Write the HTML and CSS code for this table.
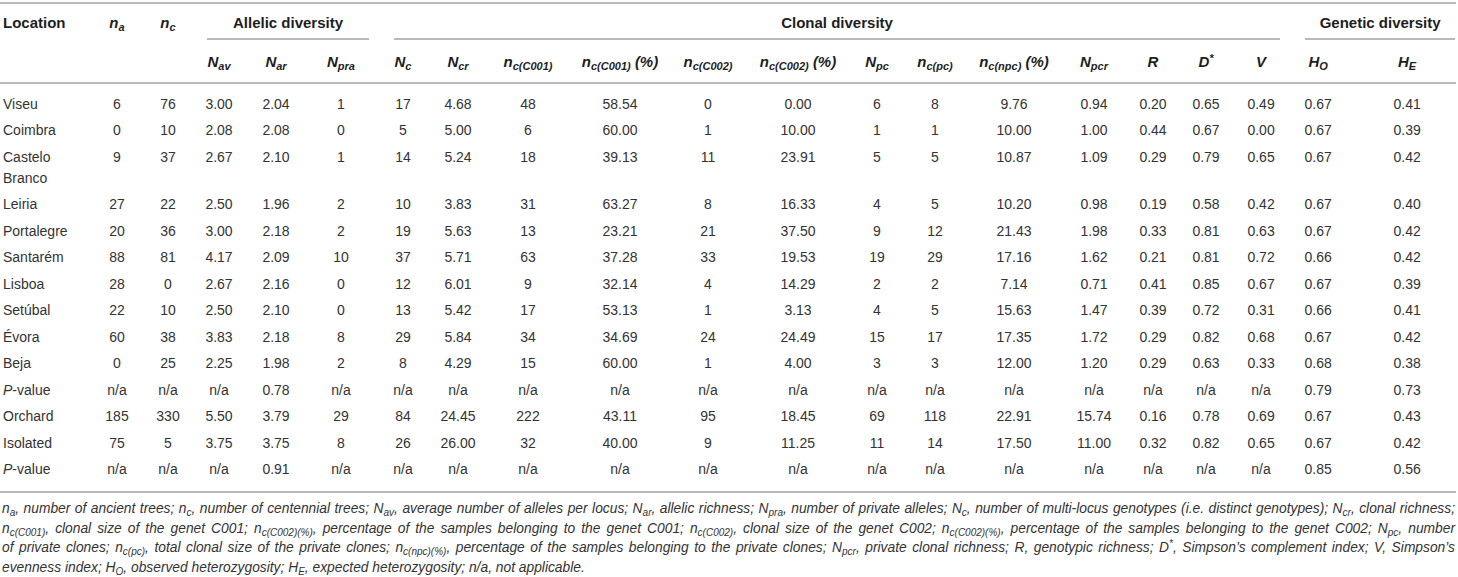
FILE: index.html
```html
<!DOCTYPE html>
<html lang="en">
<head>
<meta charset="utf-8">
<title>Table</title>
<link rel="stylesheet" href="styles.css">
</head>
<body>
<div class="page">
<table class="tbl">
<colgroup>
<col class="w-loc"><col class="w-na"><col class="w-nc">
<col class="w-nav"><col class="w-nar"><col class="w-npra">
<col class="w-ncc"><col class="w-ncr"><col class="w-c1"><col class="w-c1p"><col class="w-c2"><col class="w-c2p"><col class="w-npc"><col class="w-ncpc"><col class="w-npcp"><col class="w-npcr"><col class="w-r"><col class="w-d"><col class="w-v">
<col class="w-ho"><col class="w-he">
</colgroup>
<thead>
<tr class="h1">
<th class="loc">Location</th>
<th><i>n</i><sub>a</sub></th>
<th><i>n</i><sub>c</sub></th>
<th colspan="3" class="grp"><div class="gl gl-a">Allelic diversity</div></th>
<th colspan="13" class="grp"><div class="gl gl-c">Clonal diversity</div></th>
<th colspan="2" class="grp"><div class="gl gl-g">Genetic diversity</div></th>
</tr>
<tr class="h2">
<th></th><th></th><th></th>
<th><i>N</i><sub>av</sub></th>
<th><i>N</i><sub>ar</sub></th>
<th><i>N</i><sub>pra</sub></th>
<th><i>N</i><sub>c</sub></th>
<th><i>N</i><sub>cr</sub></th>
<th><i>n</i><sub>c(C001)</sub></th>
<th><i>n</i><sub>c(C001)</sub> <i>(%)</i></th>
<th><i>n</i><sub>c(C002)</sub></th>
<th><i>n</i><sub>c(C002)</sub> <i>(%)</i></th>
<th><i>N</i><sub>pc</sub></th>
<th><i>n</i><sub>c(pc)</sub></th>
<th><i>n</i><sub>c(npc)</sub> <i>(%)</i></th>
<th><i>N</i><sub>pcr</sub></th>
<th><i>R</i></th>
<th><i>D</i><sup>*</sup></th>
<th><i>V</i></th>
<th><i>H</i><sub>O</sub></th>
<th class="he"><i>H</i><sub>E</sub></th>
</tr>
</thead>
<tbody>
<tr class="first"><td class="loc">Viseu</td><td>6</td><td>76</td><td>3.00</td><td>2.04</td><td>1</td><td>17</td><td>4.68</td><td>48</td><td>58.54</td><td>0</td><td>0.00</td><td>6</td><td>8</td><td>9.76</td><td>0.94</td><td>0.20</td><td>0.65</td><td>0.49</td><td>0.67</td><td class="he">0.41</td></tr>
<tr><td class="loc">Coimbra</td><td>0</td><td>10</td><td>2.08</td><td>2.08</td><td>0</td><td>5</td><td>5.00</td><td>6</td><td>60.00</td><td>1</td><td>10.00</td><td>1</td><td>1</td><td>10.00</td><td>1.00</td><td>0.44</td><td>0.67</td><td>0.00</td><td>0.67</td><td class="he">0.39</td></tr>
<tr><td class="loc">Castelo Branco</td><td>9</td><td>37</td><td>2.67</td><td>2.10</td><td>1</td><td>14</td><td>5.24</td><td>18</td><td>39.13</td><td>11</td><td>23.91</td><td>5</td><td>5</td><td>10.87</td><td>1.09</td><td>0.29</td><td>0.79</td><td>0.65</td><td>0.67</td><td class="he">0.42</td></tr>
<tr><td class="loc">Leiria</td><td>27</td><td>22</td><td>2.50</td><td>1.96</td><td>2</td><td>10</td><td>3.83</td><td>31</td><td>63.27</td><td>8</td><td>16.33</td><td>4</td><td>5</td><td>10.20</td><td>0.98</td><td>0.19</td><td>0.58</td><td>0.42</td><td>0.67</td><td class="he">0.40</td></tr>
<tr><td class="loc">Portalegre</td><td>20</td><td>36</td><td>3.00</td><td>2.18</td><td>2</td><td>19</td><td>5.63</td><td>13</td><td>23.21</td><td>21</td><td>37.50</td><td>9</td><td>12</td><td>21.43</td><td>1.98</td><td>0.33</td><td>0.81</td><td>0.63</td><td>0.67</td><td class="he">0.42</td></tr>
<tr><td class="loc">Santarém</td><td>88</td><td>81</td><td>4.17</td><td>2.09</td><td>10</td><td>37</td><td>5.71</td><td>63</td><td>37.28</td><td>33</td><td>19.53</td><td>19</td><td>29</td><td>17.16</td><td>1.62</td><td>0.21</td><td>0.81</td><td>0.72</td><td>0.66</td><td class="he">0.42</td></tr>
<tr><td class="loc">Lisboa</td><td>28</td><td>0</td><td>2.67</td><td>2.16</td><td>0</td><td>12</td><td>6.01</td><td>9</td><td>32.14</td><td>4</td><td>14.29</td><td>2</td><td>2</td><td>7.14</td><td>0.71</td><td>0.41</td><td>0.85</td><td>0.67</td><td>0.67</td><td class="he">0.39</td></tr>
<tr><td class="loc">Setúbal</td><td>22</td><td>10</td><td>2.50</td><td>2.10</td><td>0</td><td>13</td><td>5.42</td><td>17</td><td>53.13</td><td>1</td><td>3.13</td><td>4</td><td>5</td><td>15.63</td><td>1.47</td><td>0.39</td><td>0.72</td><td>0.31</td><td>0.66</td><td class="he">0.41</td></tr>
<tr><td class="loc">Évora</td><td>60</td><td>38</td><td>3.83</td><td>2.18</td><td>8</td><td>29</td><td>5.84</td><td>34</td><td>34.69</td><td>24</td><td>24.49</td><td>15</td><td>17</td><td>17.35</td><td>1.72</td><td>0.29</td><td>0.82</td><td>0.68</td><td>0.67</td><td class="he">0.42</td></tr>
<tr><td class="loc">Beja</td><td>0</td><td>25</td><td>2.25</td><td>1.98</td><td>2</td><td>8</td><td>4.29</td><td>15</td><td>60.00</td><td>1</td><td>4.00</td><td>3</td><td>3</td><td>12.00</td><td>1.20</td><td>0.29</td><td>0.63</td><td>0.33</td><td>0.68</td><td class="he">0.38</td></tr>
<tr><td class="loc"><i>P</i>-value</td><td>n/a</td><td>n/a</td><td>n/a</td><td>0.78</td><td>n/a</td><td>n/a</td><td>n/a</td><td>n/a</td><td>n/a</td><td>n/a</td><td>n/a</td><td>n/a</td><td>n/a</td><td>n/a</td><td>n/a</td><td>n/a</td><td>n/a</td><td>n/a</td><td>0.79</td><td class="he">0.73</td></tr>
<tr><td class="loc">Orchard</td><td>185</td><td>330</td><td>5.50</td><td>3.79</td><td>29</td><td>84</td><td>24.45</td><td>222</td><td>43.11</td><td>95</td><td>18.45</td><td>69</td><td>118</td><td>22.91</td><td>15.74</td><td>0.16</td><td>0.78</td><td>0.69</td><td>0.67</td><td class="he">0.43</td></tr>
<tr><td class="loc">Isolated</td><td>75</td><td>5</td><td>3.75</td><td>3.75</td><td>8</td><td>26</td><td>26.00</td><td>32</td><td>40.00</td><td>9</td><td>11.25</td><td>11</td><td>14</td><td>17.50</td><td>11.00</td><td>0.32</td><td>0.82</td><td>0.65</td><td>0.67</td><td class="he">0.42</td></tr>
<tr class="last"><td class="loc"><i>P</i>-value</td><td>n/a</td><td>n/a</td><td>n/a</td><td>0.91</td><td>n/a</td><td>n/a</td><td>n/a</td><td>n/a</td><td>n/a</td><td>n/a</td><td>n/a</td><td>n/a</td><td>n/a</td><td>n/a</td><td>n/a</td><td>n/a</td><td>n/a</td><td>n/a</td><td>0.85</td><td class="he">0.56</td></tr>
</tbody>
</table>
<div class="note">
<span class="ln">n<sub>a</sub>, number of ancient trees; n<sub>c</sub>, number of centennial trees; N<sub>av</sub>, average number of alleles per locus; N<sub>ar</sub>, allelic richness; N<sub>pra</sub>, number of private alleles; N<sub>c</sub>, number of multi-locus genotypes (i.e. distinct genotypes); N<sub>cr</sub>, clonal richness;</span>
<span class="ln">n<sub>c(C001)</sub>, clonal size of the genet C001; n<sub>c(C002)(%)</sub>, percentage of the samples belonging to the genet C001; n<sub>c(C002)</sub>, clonal size of the genet C002; n<sub>c(C002)(%)</sub>, percentage of the samples belonging to the genet C002; N<sub>pc</sub>, number</span>
<span class="ln">of private clones; n<sub>c(pc)</sub>, total clonal size of the private clones; n<sub>c(npc)(%)</sub>, percentage of the samples belonging to the private clones; N<sub>pcr</sub>, private clonal richness; R, genotypic richness; D<sup>*</sup>, Simpson’s complement index; V, Simpson’s</span>
<span class="ln ln-end">evenness index; H<sub>O</sub>, observed heterozygosity; H<sub>E</sub>, expected heterozygosity; n/a, not applicable.</span>
</div>
</div>
</body>
</html>
```
FILE: styles.css
```css
html, body {
  margin: 0;
  padding: 0;
  background: #ffffff;
}
body {
  font-family: "Liberation Sans", Arial, Helvetica, sans-serif;
  color: #333333;
}
.page {
  width: 1458px;
  padding-top: 2px;
}
.tbl {
  width: 1456px;
  table-layout: fixed;
  border-collapse: separate;
  border-spacing: 0;
  border-top: 2px solid #b9b9b9;
}
.w-loc { width: 92px; }
.w-na { width: 50px; }
.w-nc { width: 52px; }
.w-nav { width: 50px; }
.w-nar { width: 64px; }
.w-npra { width: 66px; }
.w-ncc { width: 58px; }
.w-ncr { width: 52px; }
.w-c1 { width: 88px; }
.w-c1p { width: 96px; }
.w-c2 { width: 80px; }
.w-c2p { width: 100px; }
.w-npc { width: 58px; }
.w-ncpc { width: 58px; }
.w-npcp { width: 100px; }
.w-npcr { width: 60px; }
.w-r { width: 58px; }
.w-d { width: 48px; }
.w-v { width: 62px; }
.w-ho { width: 52px; }
.w-he { width: 112px; }

th {
  font-weight: bold;
  font-size: 15px;
  color: #1e1e1e;
  text-align: center;
  padding: 0;
  white-space: nowrap;
}
th i { font-style: italic; }
th sub, th sup {
  font-style: italic;
  font-size: 11px;
  line-height: 0;
}
th sub { vertical-align: -3px; }
th sup { vertical-align: 5px; }

.h1 th {
  padding-top: 3px;
  line-height: 31px;
  height: 34px;
  vertical-align: top;
}
.h1 th.grp {
  padding-top: 0;
}
.gl {
  padding-top: 3px;
  line-height: 31px;
  border-bottom: 2px solid #b9b9b9;
  font-style: normal;
}
.gl-a { margin: 0 5px 0 13px; }
.gl-c { margin: 0 12px 0 20px; }
.gl-g { margin: 0 1px 0 13px; }

.h2 th {
  line-height: 41px;
  border-bottom: 2px solid #b9b9b9;
}

th.loc, td.loc {
  text-align: left;
  padding-left: 3px;
}
th.he, td.he {
  padding-left: 14px;
}

td {
  font-size: 14px;
  line-height: 21px;
  padding: 2.75px 0;
  text-align: center;
  vertical-align: top;
  color: #333333;
}
td.loc { padding-right: 2px; }
.first td { padding-top: 9.5px; }
.last td {
  padding-bottom: 11px;
  border-bottom: 2px solid #b9b9b9;
}

.note {
  margin: 6px 0 0 0;
  padding: 0 3px 0 2px;
  font-size: 13.8px;
  line-height: 19.5px;
  font-style: italic;
  color: #333333;
}
.ln {
  display: block;
  text-align: justify;
  text-align-last: justify;
}
.ln-end {
  text-align-last: left;
}
.note sub, .note sup {
  font-size: 10px;
  line-height: 0;
}
.note sub { vertical-align: -3px; }
.note sup { vertical-align: 5px; }
```
